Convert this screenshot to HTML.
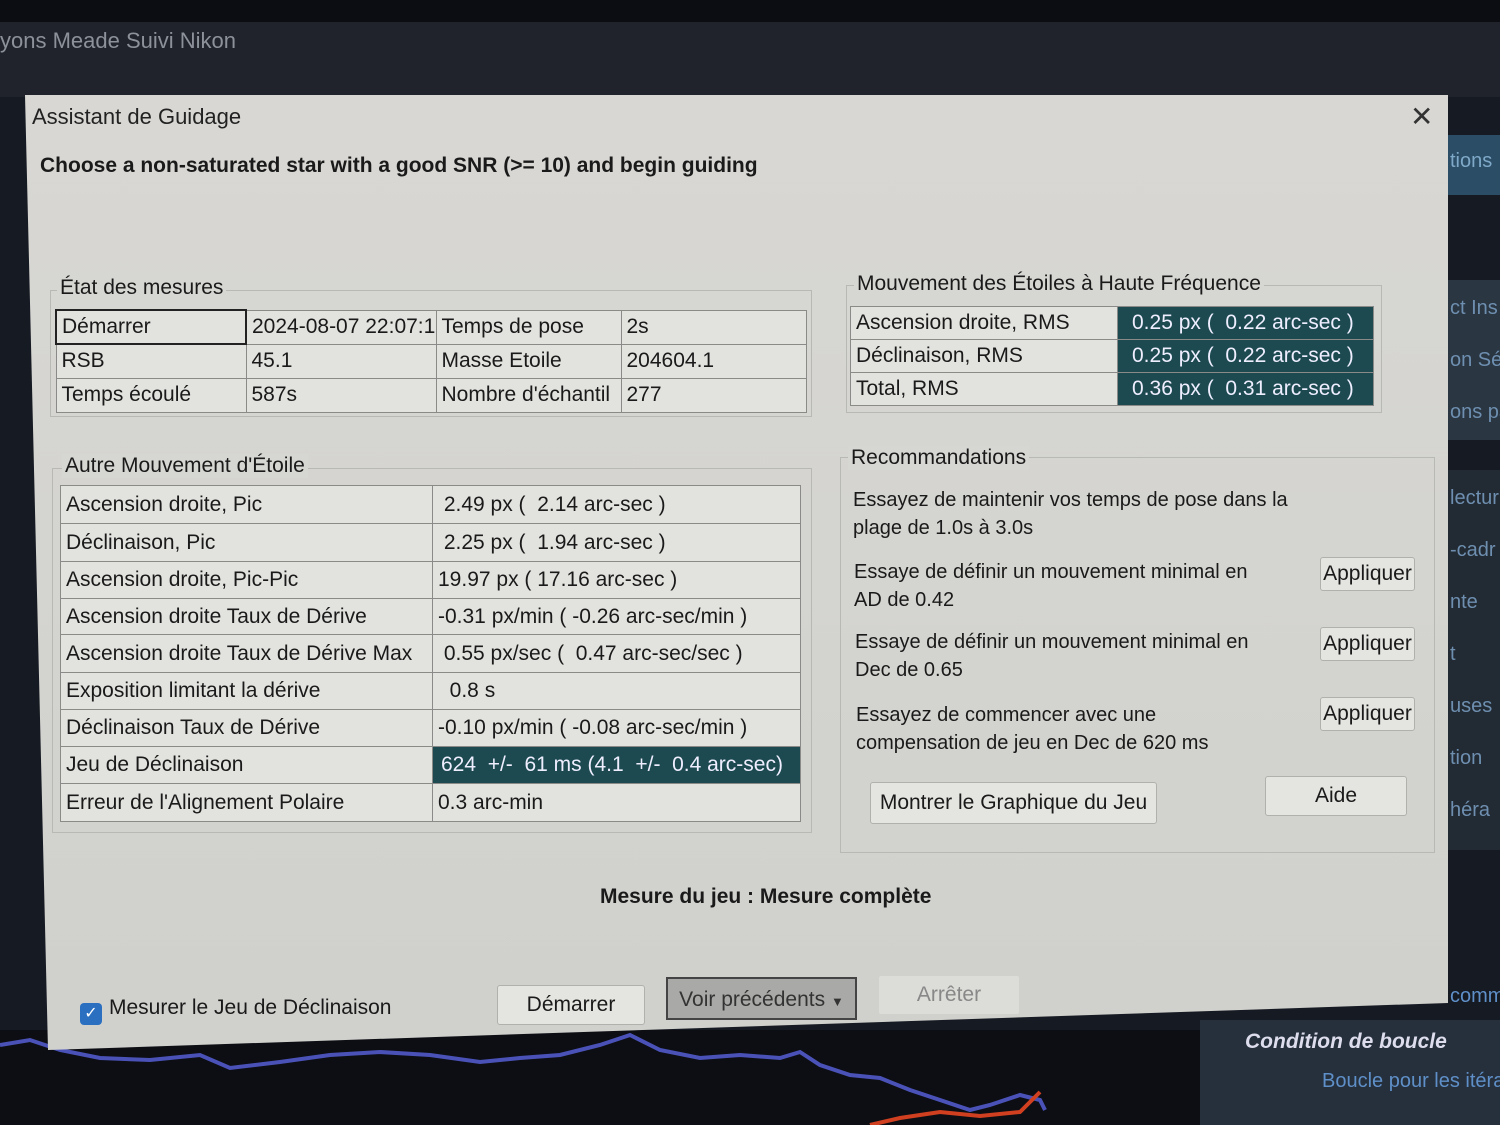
<!DOCTYPE html>
<html><head><meta charset="utf-8"><style>
*{margin:0;padding:0;box-sizing:border-box}
body{width:1500px;height:1125px;overflow:hidden;background:#161a22;font-family:"Liberation Sans Narrow","Liberation Sans",sans-serif;color:#1a1a1a;position:relative;white-space:nowrap}
.a{position:absolute}
.dlg{position:absolute;left:0;top:0;width:1500px;height:1125px;background:linear-gradient(180deg,#d9d8d4 0%,#d3d3cf 60%,#cfd0cc 100%);clip-path:polygon(25px 95px,1448px 95px,1448px 1003px,48px 1050px)}
table{border-collapse:collapse;position:absolute;font-size:21px;table-layout:fixed}
td{border:1.5px solid #8a8a88;padding:0 5px;white-space:nowrap;overflow:hidden;background:#e2e2de}
td.d{background:#1d4a50;color:#eef;padding-left:14px}
.grp{position:absolute;border:1.5px solid #b8b8b4}
.lbl{position:absolute;font-size:21px;background:#d6d6d2;padding:0 3px}
.btn{position:absolute;background:#e4e4e0;border:1.5px solid #b0b0ac;border-radius:3px;font-size:21px;text-align:center}
.rec{position:absolute;font-size:20px;line-height:28px}
.side{position:absolute;left:1450px;width:50px;overflow:hidden;font-size:20px;color:#6e8fb0;line-height:52px}
</style></head><body>
<div class="a" style="left:0;top:0;width:1500px;height:22px;background:#0b0d12"></div>
<div class="a" style="left:0;top:22px;width:1500px;height:75px;background:#20232b"></div>
<div class="a" style="left:0;top:28px;font-size:22px;color:#8c919a">yons Meade Suivi Nikon</div>
<div class="a" style="left:1448px;top:135px;width:52px;height:60px;background:#2b4d66"></div>
<div class="side" style="top:135px;color:#7fa9c8">tions</div>
<div class="a" style="left:1448px;top:280px;width:52px;height:160px;background:#2a3642"></div>
<div class="side" style="top:282px">ct Ins<br>on Séc<br>ons pa</div>
<div class="a" style="left:1448px;top:470px;width:52px;height:380px;background:#222a33"></div>
<div class="side" style="top:472px">lectur<br>-cadr<br>nte<br>t<br>uses<br>tion<br>héra</div>
<div class="a" style="left:0;top:1030px;width:1200px;height:95px;background:#0c0e14"></div>
<svg class="a" style="left:0;top:1000px" width="1200" height="125"><polyline fill="none" stroke="#4a52b8" stroke-width="4" points="0,45 30,40 60,50 100,58 150,60 200,55 230,68 280,62 330,55 380,52 430,55 480,62 520,58 560,55 600,45 630,35 660,50 700,58 740,55 780,58 800,52 820,65 850,75 880,78 910,90 940,100 970,110 990,105 1020,95 1040,100 1045,110"/><polyline fill="none" stroke="#d04020" stroke-width="4" points="870,125 900,118 940,112 980,116 1020,112 1040,92"/></svg>
<div class="a" style="left:1200px;top:1020px;width:300px;height:105px;background:#25303c;overflow:hidden"></div>
<div class="a" style="left:1245px;top:1030px;font-size:21px;color:#dde;font-style:italic;font-weight:bold">Condition de boucle</div>
<div class="a" style="left:1322px;top:1070px;width:178px;overflow:hidden;font-size:20px;color:#5f8fc8">Boucle pour les itéra</div>
<div class="side" style="top:970px;color:#5f8fc8">comm</div>

<div class="dlg"></div>
<div class="a" style="left:32px;top:104px;font-size:22px;color:#222">Assistant de Guidage</div>
<div class="a" style="left:1410px;top:100px;font-size:28px;color:#333">✕</div>
<div class="a" style="left:40px;top:154px;font-size:21px;font-weight:bold;color:#1a1a1a">Choose a non-saturated star with a good SNR (&gt;= 10) and begin guiding</div>

<div class="grp" style="left:50px;top:290px;width:762px;height:127px"></div>
<div class="lbl" style="left:57px;top:276px">État des mesures</div>
<table style="left:55px;top:309px;width:750px"><colgroup><col style="width:190px"><col style="width:190px"><col style="width:185px"><col style="width:185px"></colgroup>
<tr style="height:34px"><td style="border:2px solid #222">Démarrer</td><td>2024-08-07 22:07:18</td><td>Temps de pose</td><td>2s</td></tr>
<tr style="height:34px"><td>RSB</td><td>45.1</td><td>Masse Etoile</td><td>204604.1</td></tr>
<tr style="height:34px"><td>Temps écoulé</td><td>587s</td><td>Nombre d'échantil</td><td>277</td></tr></table>

<div class="grp" style="left:846px;top:285px;width:536px;height:128px"></div>
<div class="lbl" style="left:854px;top:272px">Mouvement des Étoiles à Haute Fréquence</div>
<table style="left:850px;top:306px;width:523px"><colgroup><col style="width:267px"><col style="width:256px"></colgroup>
<tr style="height:33px"><td>Ascension droite, RMS</td><td class="d">0.25 px (&nbsp; 0.22 arc-sec )</td></tr>
<tr style="height:33px"><td>Déclinaison, RMS</td><td class="d">0.25 px (&nbsp; 0.22 arc-sec )</td></tr>
<tr style="height:33px"><td>Total, RMS</td><td class="d">0.36 px (&nbsp; 0.31 arc-sec )</td></tr></table>

<div class="grp" style="left:52px;top:468px;width:760px;height:365px"></div>
<div class="lbl" style="left:62px;top:454px">Autre Mouvement d'Étoile</div>
<table style="left:60px;top:485px;width:740px"><colgroup><col style="width:372px"><col style="width:368px"></colgroup>
<tr style="height:38px"><td>Ascension droite, Pic</td><td>&nbsp;2.49 px (&nbsp; 2.14 arc-sec )</td></tr>
<tr style="height:38px"><td>Déclinaison, Pic</td><td>&nbsp;2.25 px (&nbsp; 1.94 arc-sec )</td></tr>
<tr style="height:37px"><td>Ascension droite, Pic-Pic</td><td>19.97 px ( 17.16 arc-sec )</td></tr>
<tr style="height:36px"><td>Ascension droite Taux de Dérive</td><td>-0.31 px/min ( -0.26 arc-sec/min )</td></tr>
<tr style="height:38px"><td>Ascension droite Taux de Dérive Max</td><td>&nbsp;0.55 px/sec (&nbsp; 0.47 arc-sec/sec )</td></tr>
<tr style="height:37px"><td>Exposition limitant la dérive</td><td>&nbsp;&nbsp;0.8 s</td></tr>
<tr style="height:37px"><td>Déclinaison Taux de Dérive</td><td>-0.10 px/min ( -0.08 arc-sec/min )</td></tr>
<tr style="height:37px"><td>Jeu de Déclinaison</td><td class="d" style="padding-left:8px">624&nbsp; +/-&nbsp; 61 ms (4.1&nbsp; +/-&nbsp; 0.4 arc-sec)</td></tr>
<tr style="height:38px"><td>Erreur de l'Alignement Polaire</td><td>0.3 arc-min</td></tr></table>

<div class="grp" style="left:840px;top:457px;width:595px;height:396px"></div>
<div class="lbl" style="left:848px;top:446px">Recommandations</div>
<div class="rec" style="left:853px;top:486px">Essayez de maintenir vos temps de pose dans la<br>plage de 1.0s à 3.0s</div>
<div class="rec" style="left:854px;top:558px">Essaye de définir un mouvement minimal en<br>AD de 0.42</div>
<div class="rec" style="left:855px;top:628px">Essaye de définir un mouvement minimal en<br>Dec de 0.65</div>
<div class="rec" style="left:856px;top:701px">Essayez de commencer avec une<br>compensation de jeu en Dec de 620 ms</div>
<div class="btn" style="left:1320px;top:557px;width:95px;height:34px;line-height:31px">Appliquer</div>
<div class="btn" style="left:1320px;top:627px;width:95px;height:34px;line-height:31px">Appliquer</div>
<div class="btn" style="left:1320px;top:697px;width:95px;height:34px;line-height:31px">Appliquer</div>
<div class="btn" style="left:870px;top:782px;width:287px;height:42px;line-height:40px">Montrer le Graphique du Jeu</div>
<div class="btn" style="left:1265px;top:776px;width:142px;height:40px;line-height:38px">Aide</div>

<div class="a" style="left:600px;top:885px;font-size:21px;font-weight:bold">Mesure du jeu : Mesure complète</div>
<div class="a" style="left:80px;top:1003px;width:22px;height:22px;background:#2a6fc0;border-radius:4px;color:#fff;font-size:16px;text-align:center;line-height:22px">✓</div>
<div class="a" style="left:109px;top:996px;font-size:21px">Mesurer le Jeu de Déclinaison</div>
<div class="btn" style="left:497px;top:985px;width:148px;height:40px;line-height:38px">Démarrer</div>
<div class="btn" style="left:666px;top:977px;width:191px;height:43px;line-height:41px;background:#a9aaa7;border:2px solid #444;border-radius:0;color:#333">Voir précédents&nbsp;<span style="font-size:13px">▼</span></div>
<div class="btn" style="left:878px;top:975px;width:142px;height:40px;line-height:38px;background:#dcdcd8;color:#888;border-color:#d0d0cc">Arrêter</div>
</body></html>
